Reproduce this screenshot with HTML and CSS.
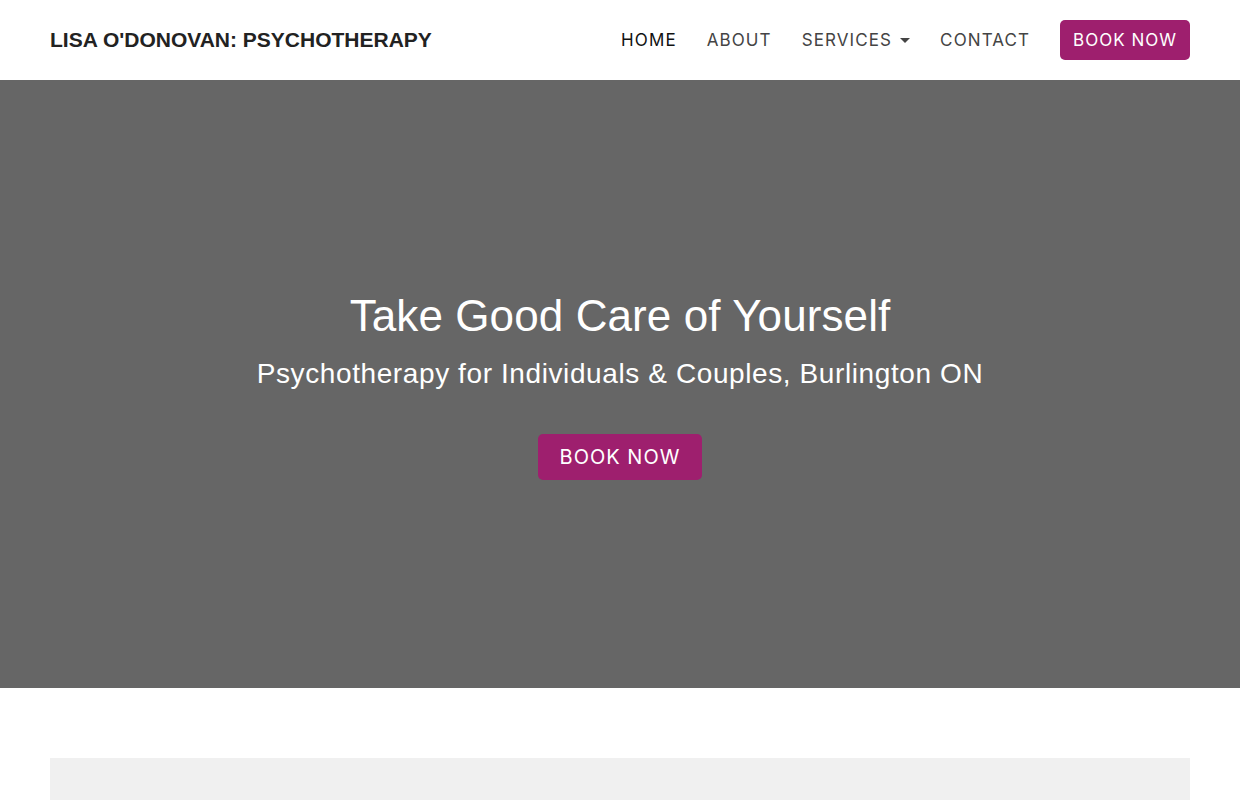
FILE: index.html
```html
<!doctype html>
<html lang="en">
<head>
    <meta charset="UTF-8">
    <meta name="viewport" content="width=device-width, initial-scale=1.0">
    <title>Lisa O'Donovan: Psychotherapy</title>

    <link rel="stylesheet" href="styles.css">
</head>
<body>
    <header class="site-header">
        <a class="brand" href="#">LISA O'DONOVAN: PSYCHOTHERAPY</a>
        <nav class="main-nav">
            <a href="#" class="nav-link active">HOME</a>
            <a href="#" class="nav-link">ABOUT</a>
            <a href="#" class="nav-link dropdown">SERVICES <span class="caret"></span></a>
            <a href="#" class="nav-link">CONTACT</a>
            <a href="#" class="btn btn-nav">BOOK NOW</a>
        </nav>
    </header>

    <section class="hero">
        <h1>Take Good Care of Yourself</h1>
        <p class="hero-sub">Psychotherapy for Individuals &amp; Couples, Burlington ON</p>
        <a href="#" class="btn btn-hero">BOOK NOW</a>
    </section>

    <main class="content">
        <div class="panel"></div>
    </main>
</body>
</html>
```

FILE: styles.css
```css
body {
    font-family: 'Liberation Sans', Arial, sans-serif;
    margin: 0;
    padding: 0;
    color: #222;
}

a {
    text-decoration: none;
}

.site-header {
    height: 80px;
    padding: 0 50px;
    display: flex;
    align-items: center;
    justify-content: space-between;
    background-color: #fff;
}

.brand {
    font-size: 21px;
    font-weight: bold;
    color: #222;
}

.main-nav {
    display: flex;
    align-items: center;
}

.nav-link {
    font-family: Inter, 'Liberation Sans', sans-serif;
    font-size: 17px;
    letter-spacing: 1.1px;
    color: #444;
    margin-right: 30px;
    display: flex;
    align-items: center;
}

.nav-link.active {
    color: #111;
}

.caret {
    display: inline-block;
    width: 0;
    height: 0;
    margin-left: 8px;
    border-left: 5px solid transparent;
    border-right: 5px solid transparent;
    border-top: 5px solid #444;
}

.btn {
    display: inline-block;
    background-color: #9e1f6e;
    color: #fff;
    border-radius: 5px;
    letter-spacing: 1px;
}

.btn-nav {
    font-family: Inter, 'Liberation Sans', sans-serif;
    font-size: 17px;
    padding: 10px 13px 9px;
    line-height: 21px;
}

.hero {
    height: 606px;
    padding-top: 2px;
    background-color: #666;
    color: #fff;
    display: flex;
    flex-direction: column;
    align-items: center;
    justify-content: center;
    text-align: center;
}

.hero h1 {
    font-weight: normal;
    font-size: 44px;
    letter-spacing: 0.1px;
    margin: 0 0 15px;
    line-height: 52px;
}

.hero-sub {
    font-size: 28px;
    letter-spacing: 0.6px;
    margin: 0 0 43px;
    line-height: 34px;
}

.btn-hero {
    font-family: Inter, 'Liberation Sans', sans-serif;
    font-size: 20px;
    padding: 11px 22px;
    line-height: 24px;
}

.content {
    padding: 70px 50px 0;
}

.panel {
    background-color: #f0f0f0;
    height: 200px;
}
```
